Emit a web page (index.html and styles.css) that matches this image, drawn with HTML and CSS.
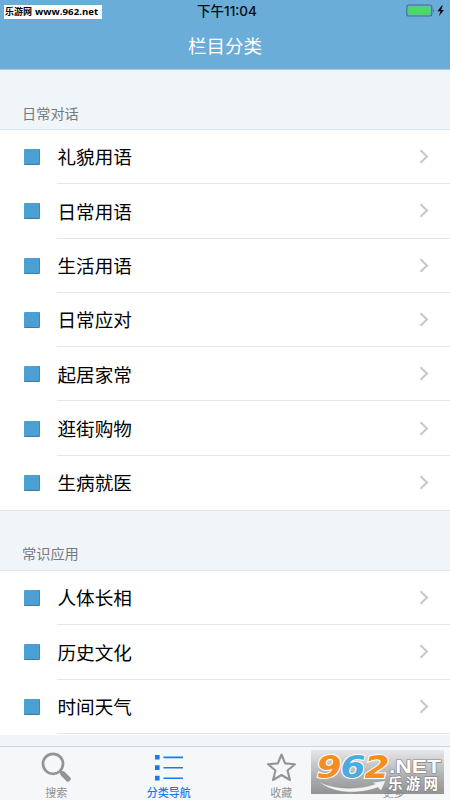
FILE: index.html
```html
<!DOCTYPE html>
<html lang="zh-CN">
<head>
<meta charset="utf-8">
<title>栏目分类</title>
<link rel="stylesheet" href="styles.css">
</head>
<body>
<div class="app">
  <header class="top">
    <div class="status">
      <span class="time">下午11:04</span>
      <svg class="battery" width="40" height="14" viewBox="0 0 40 14">
        <rect x=".8" y="1" width="25" height="11" rx="2" fill="#6aadd8" stroke="#416e91" stroke-width="1.1"/>
        <rect x="2.3" y="2.5" width="22" height="8" rx=".7" fill="#4bdb63"/>
        <path d="M27 4.5q1.8 2 0 4z" fill="#416e91"/>
        <path d="M35.8 1.5L31.5 7.3H34.4L33 12 38 6H35.2L36.7 1.5z" fill="#050709"/>
      </svg>
    </div>
    <h1 class="title">栏目分类</h1>
    <div class="site-mark"><span class="site-name">乐游网</span><span class="site-url">www.962.net</span></div>
  </header>
  <main class="content">
    <h2 class="section-title">日常对话</h2>
    <ul class="list">
      <li class="row"><i class="book"></i><span class="label">礼貌用语</span><svg class="chevron" viewBox="0 0 10 15"><path d="M1.5 1.2L8 7.5 1.5 13.8"/></svg></li>
      <li class="row"><i class="book"></i><span class="label">日常用语</span><svg class="chevron" viewBox="0 0 10 15"><path d="M1.5 1.2L8 7.5 1.5 13.8"/></svg></li>
      <li class="row"><i class="book"></i><span class="label">生活用语</span><svg class="chevron" viewBox="0 0 10 15"><path d="M1.5 1.2L8 7.5 1.5 13.8"/></svg></li>
      <li class="row"><i class="book"></i><span class="label">日常应对</span><svg class="chevron" viewBox="0 0 10 15"><path d="M1.5 1.2L8 7.5 1.5 13.8"/></svg></li>
      <li class="row"><i class="book"></i><span class="label">起居家常</span><svg class="chevron" viewBox="0 0 10 15"><path d="M1.5 1.2L8 7.5 1.5 13.8"/></svg></li>
      <li class="row"><i class="book"></i><span class="label">逛街购物</span><svg class="chevron" viewBox="0 0 10 15"><path d="M1.5 1.2L8 7.5 1.5 13.8"/></svg></li>
      <li class="row"><i class="book"></i><span class="label">生病就医</span><svg class="chevron" viewBox="0 0 10 15"><path d="M1.5 1.2L8 7.5 1.5 13.8"/></svg></li>
    </ul>
    <h2 class="section-title">常识应用</h2>
    <ul class="list partial">
      <li class="row"><i class="book"></i><span class="label">人体长相</span><svg class="chevron" viewBox="0 0 10 15"><path d="M1.5 1.2L8 7.5 1.5 13.8"/></svg></li>
      <li class="row"><i class="book"></i><span class="label">历史文化</span><svg class="chevron" viewBox="0 0 10 15"><path d="M1.5 1.2L8 7.5 1.5 13.8"/></svg></li>
      <li class="row"><i class="book"></i><span class="label">时间天气</span><svg class="chevron" viewBox="0 0 10 15"><path d="M1.5 1.2L8 7.5 1.5 13.8"/></svg></li>
    </ul>
  </main>
  <nav class="tabs">
    <div class="tab">
      <svg width="32" height="32" viewBox="0 0 32 32" fill="none" stroke="#949494">
        <circle cx="13" cy="12.8" r="10" stroke-width="2.7"/>
        <path d="M20 20L22 22" stroke-width="3"/>
        <path d="M23 22.8L28 27.8" stroke-width="5.4" stroke-linecap="round"/>
      </svg>
      <span>搜索</span>
    </div>
    <div class="tab active">
      <svg width="32" height="32" viewBox="0 0 32 32" fill="#187bea">
        <path d="M2 4h4.6v4.6H2zM2 14.3h4.6v4.6H2zM2 24.8h4.6v4.6H2zM10.5 5.6H30v1.6H10.5zM10.5 16H30v1.6H10.5zM10.5 26.4H30V28H10.5z"/>
      </svg>
      <span>分类导航</span>
    </div>
    <div class="tab">
      <svg width="32" height="32" viewBox="0 0 32 32" fill="none" stroke="#949494" stroke-width="2.1" stroke-linejoin="round">
        <path d="M16.5 3.5L20.1 12.4 29.9 13.2 22.5 19.5 25 29 16.5 24 8 29 10.5 19.5 3.1 13.2 12.9 12.4z"/>
      </svg>
      <span>收藏</span>
    </div>
    <div class="tab">
      <svg width="32" height="32" viewBox="0 0 32 32" fill="#949494"><circle cx="5" cy="16" r="2.5"/><circle cx="16" cy="16" r="2.5"/><circle cx="27" cy="16" r="2.5"/></svg>
      <span>更多</span>
    </div>
  </nav>
  <svg class="watermark" width="133" height="44" viewBox="0 0 133 44">
    <defs>
      <linearGradient id="shade" x1="0" y1="0" x2="0" y2="1">
        <stop offset="0" stop-color="#e6e7e8"/><stop offset=".45" stop-color="#bcbdbe"/><stop offset="1" stop-color="#858687" stop-opacity=".88"/>
      </linearGradient>
    </defs>
    <rect width="133" height="44" fill="url(#shade)"/>
    <path d="M6 30.5C22 40 48 40 64 34L60 32.5 75 30.5 70 41 67 37.5C46 45 21 44 6 30.5z" fill="#f2f2f2" stroke="#888" stroke-width=".5"/>
    <g class="digits">
      <text x="5.5" y="27.5" textLength="25" lengthAdjust="spacingAndGlyphs">9</text>
      <text class="six" x="29.5" y="27.5" textLength="25" lengthAdjust="spacingAndGlyphs">6</text>
      <text x="53.5" y="27.5" textLength="25" lengthAdjust="spacingAndGlyphs">2</text>
    </g>
    <text class="net" x="78" y="22.5" textLength="52" lengthAdjust="spacingAndGlyphs">.NET</text>
    <text class="brand" x="77" y="39" textLength="50">乐游网</text>
  </svg>
</div>
</body>
</html>
```

FILE: styles.css
```css
* { box-sizing: border-box; }
body {
  margin: 0;
  font-family: "Noto Sans CJK SC", sans-serif;
  background: #eff5f9;
}
.app {
  position: relative;
  width: 450px;
  height: 800px;
  display: flex;
  flex-direction: column;
  overflow: hidden;
}
.top {
  position: relative;
  height: 70px;
  flex: none;
  background: #6aadd8;
  border-bottom: 1px solid #a9c9df;
}
.status {
  height: 22px;
  display: grid;
  grid-template-columns: 1fr auto 1fr;
  align-items: center;
}
.time {
  grid-column: 2;
  margin-left: 4px;
  font: 500 13.5px/22px Inter, "Noto Sans CJK SC", sans-serif;
  color: #080c10;
}
.battery { justify-self: end; margin-right: 4px; }
.title {
  margin: 0;
  font-size: 18.5px;
  line-height: 46px;
  font-weight: 400;
  text-align: center;
  color: #fff;
}
.site-mark {
  position: absolute;
  left: 4px;
  top: 5px;
  width: 98px;
  height: 14px;
  padding-left: 1px;
  display: flex;
  gap: 3px;
  background: #fff;
  color: #000;
  font-weight: 700;
  line-height: 14px;
  white-space: nowrap;
}
.site-name { font-size: 9px; }
.site-url { font-family: "Open Sans", sans-serif; font-size: 9.6px; letter-spacing: .05px; }
.content { height: 676px; flex: none; }
.section-title {
  margin: 0;
  height: 59.4px;
  padding: 31.5px 0 0 22px;
  font-size: 14.2px;
  line-height: 22px;
  font-weight: 400;
  color: #77797d;
}
.list {
  margin: 0;
  padding: 0;
  list-style: none;
  background: #fff;
  border-top: 1px solid #dce5eb;
  border-bottom: 1px solid #dce5eb;
}
.partial { border-bottom: 0; padding-bottom: 1px; }
.row {
  position: relative;
  height: 54.3px;
  display: flex;
  align-items: center;
  padding: 0 21px 1px 24px;
}
.row::after {
  content: "";
  position: absolute;
  left: 57px;
  right: 0;
  bottom: .4px;
  height: 1px;
  background: #e4e5e9;
}
.list:not(.partial) .row:last-child { height: 53.8px; }
.list:not(.partial) .row:last-child::after { display: none; }
.book {
  width: 16px;
  height: 16px;
  background: #4b9fd3;
  border-right: 1px solid #4189b8;
  border-bottom: 1.5px solid #40799f;
  border-radius: 1px;
}
.label {
  flex: 1;
  margin: 0 0 1.4px 17.5px;
  font-size: 18.6px;
  line-height: 28px;
  color: #000;
}
.chevron {
  width: 10px;
  height: 15px;
  margin-bottom: 1px;
  fill: none;
  stroke: #c6c6cb;
  stroke-width: 2;
}
.tabs {
  height: 54px;
  flex: none;
  display: grid;
  grid-template-columns: repeat(4, 1fr);
  background: #f5f7f9;
  border-top: 1px solid #cfd4da;
}
.tab {
  display: flex;
  flex-direction: column;
  align-items: center;
  padding-top: 4px;
  font-size: 11px;
  line-height: 18px;
  color: #929292;
}
.tab svg { flex: none; }
.active { color: #187bea; font-weight: 500; }
.watermark {
  position: absolute;
  left: 311px;
  top: 750px;
}
.digits text {
  font: italic 700 32px "DejaVu Sans", sans-serif;
  fill: #f78d20;
  stroke: #fff;
  stroke-width: 2px;
  paint-order: stroke;
}
.digits .six { fill: #4cacdf; }
.net {
  font: 700 19px "Liberation Sans", sans-serif;
  fill: #fff;
  stroke: #858585;
  stroke-width: 1.2px;
  paint-order: stroke;
}
.brand {
  font: 700 14.5px "Noto Sans CJK SC", sans-serif;
  fill: #fff;
  stroke: #777;
  stroke-width: 1px;
  paint-order: stroke;
}
```
